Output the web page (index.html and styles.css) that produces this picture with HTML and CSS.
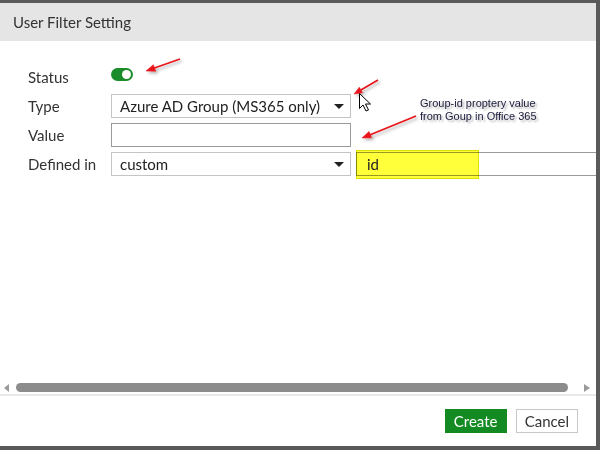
FILE: index.html
```html
<!DOCTYPE html>
<html>
<head>
    <title>User Filter Setting</title>
    <link rel="stylesheet" href="styles.css">
</head>
<body>
    <div class="dialog">
        <div class="dialog-header">User Filter Setting</div>
        <div class="dialog-body">
            <div class="form">
                <label>Status</label>
                <div class="field"><span class="toggle"><span class="knob"></span></span></div>
                <label>Type</label>
                <div class="field">
                    <div class="select"><span>Azure AD Group (MS365 only)</span><span class="caret"></span></div>
                </div>
                <label>Value</label>
                <div class="field"><div class="input"></div></div>
                <label>Defined in</label>
                <div class="field">
                    <div class="select"><span>custom</span><span class="caret"></span></div>
                    <div class="input input-id">
                        <span class="highlight"></span>
                        <span>id</span>
                    </div>
                </div>
            </div>
            <div class="hscroll">
                <span class="arrow-left"></span>
                <span class="thumb"></span>
                <span class="arrow-right"></span>
            </div>
        </div>
        <div class="dialog-footer">
            <button class="btn btn-primary">Create</button>
            <button class="btn">Cancel</button>
        </div>
    </div>

    <!-- screenshot annotations -->
    <div class="note">Group-id proptery value<br>from Goup in Office 365</div>
    <svg class="overlay" width="600" height="450" viewBox="0 0 600 450">
        <defs>
            <filter id="shadow" x="-20%" y="-50%" width="140%" height="200%">
                <feDropShadow dx="2" dy="2" stdDeviation="1.5" flood-color="#000" flood-opacity="0.3"/>
            </filter>
        </defs>
        <g filter="url(#shadow)" fill="#e8141a" stroke="#e8141a">
            <line x1="180" y1="59" x2="153" y2="68.5" stroke-width="1.6"/>
            <polygon points="146,71 153.3,64.7 155.7,71.3" stroke-width="0.5"/>
            <line x1="378" y1="80" x2="360" y2="90.5" stroke-width="1.6"/>
            <polygon points="354,94 359.3,87.2 362.5,92.8" stroke-width="0.5"/>
            <line x1="416" y1="116" x2="369" y2="135.2" stroke-width="1.6"/>
            <polygon points="362,138 369,131.4 371.6,137.8" stroke-width="0.5"/>
        </g>
        <path d="M359.5 93.5 L359.5 108.5 L363 105 L366 111 L368.5 110 L365.5 104 L370.5 104 Z"
              fill="#fff" stroke="#000" stroke-width="1" stroke-linejoin="round"/>
    </svg>
</body>
</html>
```

FILE: styles.css
```css
body {
    margin: 0;
    background-color: #5a5a5a;
    font-family: Lato, "Open Sans", sans-serif;
    color: #333;
}
.dialog {
    margin-top: 3px;
    width: 596px;
    height: 443px;
    background-color: #fff;
    display: flex;
    flex-direction: column;
    overflow: hidden;
}
.dialog-header {
    height: 38px;
    line-height: 38px;
    padding-left: 13px;
    background-color: #e5e5e5;
    font-size: 15px;
    color: #333;
}
.dialog-body {
    flex: 1;
    display: flex;
    flex-direction: column;
    justify-content: space-between;
    padding-top: 23px;
}
.form {
    display: grid;
    grid-template-columns: 83px auto;
    grid-template-rows: 25px 24px 24px 24px;
    row-gap: 5px;
    padding-left: 28px;
    font-size: 15px;
}
.form label {
    display: flex;
    align-items: center;
    color: #333;
}
.field {
    display: flex;
    gap: 5px;
}
.toggle {
    margin-top: 4px;
    width: 22px;
    height: 13px;
    border-radius: 7px;
    background-color: #1b8c2a;
    position: relative;
}
.toggle .knob {
    position: absolute;
    right: 2px;
    top: 2px;
    width: 9px;
    height: 9px;
    border-radius: 50%;
    background-color: #fff;
}
.select, .input {
    box-sizing: border-box;
    width: 240px;
    height: 24px;
    border: 1px solid #c4c4c4;
    display: flex;
    align-items: center;
    justify-content: space-between;
    padding: 0 6px 0 8px;
    color: #222;
}
.input {
    border-color: #9a9a9a;
}
.caret {
    width: 0;
    height: 0;
    border-left: 5.5px solid transparent;
    border-right: 5.5px solid transparent;
    border-top: 5px solid #222;
}
.input-id {
    position: relative;
    width: 260px;
    flex-shrink: 0;
    justify-content: flex-start;
    padding-left: 10px;
}
.input-id .highlight {
    position: absolute;
    left: -1px;
    top: -3px;
    width: 123px;
    height: 29px;
    background-color: #ffff3a;
    border: 1px solid #e0e000;
    box-sizing: border-box;
    mix-blend-mode: multiply;
}
.input-id span:last-child {
    position: relative;
}
.hscroll {
    height: 9px;
    margin-bottom: 2px;
    display: flex;
    align-items: center;
    padding: 0 4px 0 4px;
}
.arrow-left {
    width: 0;
    height: 0;
    border-top: 4px solid transparent;
    border-bottom: 4px solid transparent;
    border-right: 5px solid #9a9a9a;
}
.thumb {
    margin-left: 7px;
    width: 552px;
    height: 9px;
    border-radius: 5px;
    background-color: #8c8c8c;
}
.arrow-right {
    margin-left: 16px;
    width: 0;
    height: 0;
    border-top: 4px solid transparent;
    border-bottom: 4px solid transparent;
    border-left: 6px solid #9a9a9a;
}
.dialog-footer {
    border-top: 2px solid #e8e8e8;
    height: 52px;
    display: flex;
    justify-content: flex-end;
    align-items: flex-start;
    gap: 9px;
    padding: 13px 18px 0 0;
    box-sizing: border-box;
}
.btn {
    height: 24px;
    min-width: 62px;
    padding: 0 8px;
    border: 1px solid #c8c8c8;
    background-color: #fff;
    font-family: Lato, sans-serif;
    font-size: 15px;
    color: #333;
}
.btn-primary {
    background-color: #138a22;
    border-color: #138a22;
    color: #fff;
}
.note {
    position: absolute;
    left: 420px;
    top: 97px;
    font-family: "Liberation Sans", Arial, sans-serif;
    font-size: 11px;
    line-height: 13px;
    color: #1c1c3c;
    text-shadow: 2px 2px 2px rgba(0, 0, 0, 0.3);
}
.overlay {
    position: absolute;
    left: 0;
    top: 0;
    pointer-events: none;
}
```
